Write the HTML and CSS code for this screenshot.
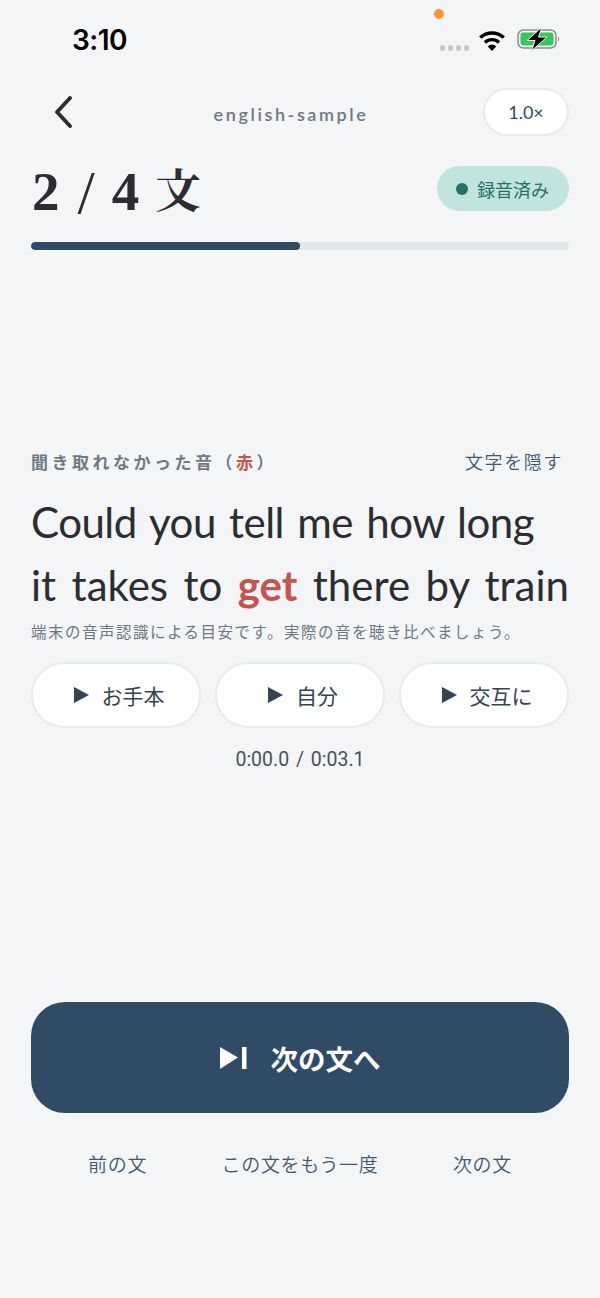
FILE: index.html
```html
<!DOCTYPE html>
<html lang="ja">
<head>
<meta charset="utf-8">
<title>english-sample</title>
<link rel="stylesheet" href="styles.css">
</head>
<body>
<div class="status">
  <span class="time">3:10</span>
  <span class="orange-dot"></span>
  <div class="status-icons">
    <span class="signal"><i></i><i></i><i></i><i></i></span>
    <svg class="wifi" width="28" height="22" viewBox="0 0 28 22"><path d="M2.300 8.600a17 17 0 0 1 23.400 0" fill="none" stroke="#000" stroke-width="3.400"/><path d="M7 13.400a10.300 10.300 0 0 1 14 0" fill="none" stroke="#000" stroke-width="3.400"/><path d="M14 22l-4.200-4.600a5.800 5.800 0 0 1 8.400 0z" fill="#000"/></svg>
    <svg class="battery" width="44" height="24" viewBox="0 0 44 24"><rect x="1" y="3" width="38" height="18" rx="5.500" fill="none" stroke="#8e8e8e" stroke-width="1.500"/><rect x="3.500" y="5.500" width="33" height="13" rx="3" fill="#35c759"/><path d="M41 9.500c1.500.5 1.500 4.500 0 5z" fill="#8e8e8e"/><path d="M25 0 10 13.500h8L14.500 24 30 10h-8.500z" fill="#000" stroke="#f3f5f7" stroke-width="1"/></svg>
  </div>
</div>
<header class="topbar">
  <svg class="back" width="22" height="32" viewBox="0 0 22 32"><path d="M17 2 4 16l13 14" fill="none" stroke="#2b2d30" stroke-width="3.800" stroke-linecap="round" stroke-linejoin="round"/></svg>
  <span class="deck">english-sample</span>
  <button class="speed">1.0×</button>
</header>
<div class="title-row">
  <h1 class="count">2<span class="count-sep">/</span>4<span class="count-unit">文</span></h1>
  <span class="badge"><i class="badge-dot"></i>録音済み</span>
</div>
<div class="progress"><div class="progress-fill" style="width:50%"></div></div>

<section class="practice">
  <div class="label-row">
    <span class="label">聞き取れなかった音（<em>赤</em>）</span>
    <button class="hide">文字を隠す</button>
  </div>
  <p class="sentence"><span class="line line-one">Could you tell me how long</span><span class="line line-two">it takes to <strong>get</strong> there by train</span></p>
  <p class="note">端末の音声認識による目安です。実際の音を聴き比べましょう。</p>
  <div class="players">
    <button class="play"><svg width="17" height="18" viewBox="0 0 17 18"><path d="M1 1l15 8-15 8z" fill="#364352"/></svg>お手本</button>
    <button class="play"><svg width="17" height="18" viewBox="0 0 17 18"><path d="M1 1l15 8-15 8z" fill="#364352"/></svg>自分</button>
    <button class="play"><svg width="17" height="18" viewBox="0 0 17 18"><path d="M1 1l15 8-15 8z" fill="#364352"/></svg>交互に</button>
  </div>
  <div class="timer">0:00.0 / 0:03.1</div>
</section>

<button class="next"><svg width="27" height="24" viewBox="0 0 27 24"><path d="M0 1l18 10.500L0 23z" fill="#fff"/><rect x="22" y="1" width="4.500" height="22" fill="#fff"/></svg>次の文へ</button>
<nav class="links">
  <a>前の文</a>
  <a>この文をもう一度</a>
  <a>次の文</a>
</nav>
</body>
</html>
```

FILE: styles.css
```css
* { box-sizing: border-box; }
html, body { margin: 0; height: 1298px; }
body {
  background: #f3f5f7;
  color: #2b2d30;
  font-family: "Lato", "Noto Sans CJK JP", sans-serif;
  padding: 0 31px;
  overflow: hidden;
}
button { font-family: inherit; padding: 0; cursor: pointer; }

.status { position: relative; height: 78px; display: flex; justify-content: space-between; padding: 22px 8px 0 41px; }
.time { font: 600 28px/36px "Inter", sans-serif; color: #000; letter-spacing: -0.500px; }
.orange-dot { position: absolute; left: 403px; top: 9px; width: 10px; height: 10px; border-radius: 50%; background: #fb9434; }
.status-icons { display: flex; align-items: flex-start; gap: 9px; padding-top: 6px; }
.signal { display: flex; gap: 2.500px; padding-top: 17px; }
.signal i { width: 5.500px; height: 5.500px; border-radius: 50%; background: #c9c9cc; }
.wifi { margin-top: 1px; margin-right: 2px; }
.battery { margin-top: -1px; }

.topbar { display: flex; align-items: center; justify-content: space-between; height: 48px; margin-top: 10px; }
.back { margin-left: 22px; }
.deck { font-size: 18px; font-weight: 600; letter-spacing: 2.600px; color: #6f7882; margin: 3px 0 0 24px; }
.speed { width: 86px; height: 48px; border-radius: 24px; border: 2px solid #e8eaed; background: #fff; color: #2f4b66; font-size: 18px; font-weight: 400; }

.title-row { display: flex; justify-content: space-between; align-items: flex-start; height: 64px; margin-top: 20px; }
.count { display: flex; align-items: center; height: 64px; margin: 0 0 0 1px; padding-top: 7px; font: 700 55px/64px "Liberation Serif", "Noto Serif CJK JP", serif; color: #2b2d30; }
.count-sep { font-weight: 400; font-size: 62px; margin: 0 17px 0 18px; }
.count-unit { font-size: 46px; margin-left: 16px; }
.badge { display: flex; align-items: center; gap: 9px; width: 132px; height: 45px; margin-top: 10px; padding-left: 19px; border-radius: 23px; background: #c2e4df; color: #26706a; font-size: 18px; }
.badge-dot { width: 12px; height: 12px; border-radius: 50%; background: #26706a; }

.progress { height: 8px; border-radius: 4px; background: #e3e8ea; margin-top: 22px; overflow: hidden; }
.progress-fill { height: 100%; border-radius: 4px; background: #2f4b66; }

.practice { margin-top: 195px; }
.label-row { display: flex; justify-content: space-between; align-items: center; height: 32px; }
.label { font-size: 17px; font-weight: 600; letter-spacing: 3.500px; color: #6f7a85; }
.label em { font-style: normal; color: #c8524e; }
.hide { border: 0; background: none; font-size: 18px; font-weight: 350; color: #3d5871; margin-right: 6px; letter-spacing: 1.600px; }
.sentence { margin: 14px 0 0; font-size: 42px; line-height: 63px; white-space: nowrap; color: #2b2d30; }
.line { display: block; }
.line-one { letter-spacing: -0.500px; word-spacing: 3px; }
.line-two { word-spacing: 4.700px; }
.sentence strong { font-weight: 700; color: #c8524e; }
.note { margin: 3px 0 0; font-size: 15.500px; line-height: 24px; letter-spacing: 1.500px; color: #6f7882; white-space: nowrap; }
.players { display: grid; grid-template-columns: repeat(3, 1fr); gap: 14px; margin-top: 18px; }
.play { height: 66px; display: flex; align-items: center; justify-content: center; gap: 12px; padding-left: 5px; border-radius: 33px; border: 2px solid #e8eaed; background: #fff; color: #364352; font-size: 21px; }
.timer { text-align: center; margin-top: 18px; font-family: "Roboto", sans-serif; font-size: 19.500px; line-height: 28px; word-spacing: 2px; color: #46525e; }

.next { display: flex; align-items: center; justify-content: center; gap: 24px; width: 100%; height: 111px; margin-top: 228px; border: 0; border-radius: 34px; background: #2f4b66; color: #fff; font-size: 27.500px; font-weight: 700; }
.links { display: flex; justify-content: space-between; padding: 0 57px; margin-top: 38px; font-size: 19px; font-weight: 350; line-height: 28px; color: #3f5870; letter-spacing: 0.700px; }
```
